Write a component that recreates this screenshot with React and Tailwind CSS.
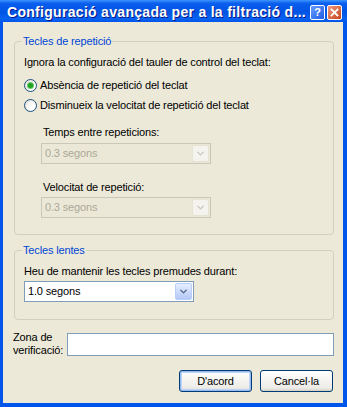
import { ChevronDown } from 'lucide-react';

function Radio({ checked, label }) {
  return (
    <div className="flex items-center gap-[3px] h-[20px]">
      <span className="w-[13px] h-[13px] rounded-full border border-[#1C5180] bg-[radial-gradient(circle_at_65%_65%,#ffffff_25%,#DCD9CB)] flex items-center justify-center">
        {checked && <span className="w-[5px] h-[5px] rounded-full bg-[#21A121] shadow-[0_0_0_1px_#6BC96B]" />}
      </span>
      <span>{label}</span>
    </div>
  );
}

function Combo({ value, disabled }) {
  return (
    <div
      className={`flex items-center w-[170px] h-[21px] border ${
        disabled ? 'border-[#C9C7BA] bg-[#EBE8D7] text-[#ACA899]' : 'border-[#7F9DB9] bg-white text-black'
      }`}
    >
      <span className="flex-1 pl-[3px]">{value}</span>
      <span
        className={`w-[17px] h-[17px] mr-[1px] rounded-[2px] flex items-center justify-center border ${
          disabled
            ? 'border-[#E6E3D5] bg-[#F4F3EE] text-[#C9C7BA]'
            : 'border-[#B9CDFB] bg-[linear-gradient(to_bottom,#E6EEFF,#B4C8F6)] text-[#4D6185]'
        }`}
      >
        <ChevronDown size={11} strokeWidth={3} />
      </span>
    </div>
  );
}

function XpButton({ label, isDefault }) {
  return (
    <button
      className={`w-[73px] h-[22px] rounded-[3px] border border-[#003C74] bg-[linear-gradient(to_bottom,#FFFFFF,#ECEBE6_85%,#D6D0C5)] ${
        isDefault ? 'shadow-[inset_0_0_0_1px_#97B8F2,inset_0_0_0_2px_#BCD4F6]' : ''
      }`}
    >
      {label}
    </button>
  );
}

export default function App() {
  return (
    <div
      className="w-[347px] h-[407px] flex flex-col bg-[#0055EA] text-[11px] text-black tracking-[-0.15px] overflow-hidden"
      style={{ fontFamily: '"Liberation Sans", Arial, sans-serif' }}
    >
      <div className="h-[22px] flex items-center pl-[7px] pr-[5px] bg-[linear-gradient(to_bottom,#3D95FF,#0A5FEE_15%,#0054E3_55%,#0A62F0_85%,#0055EA)]">
        <span className="flex-1 pt-[2px] text-white font-bold text-[14px] tracking-[0.3px] [text-shadow:1px_1px_#0A1883] whitespace-nowrap">
          Configuració avançada per a la filtració d...
        </span>
        <div className="flex gap-[2px] mt-[3px]">
          <span className="w-[15px] h-[15px] rounded-[2px] border border-white bg-[linear-gradient(135deg,#6A9CFF,#1E5CE6)] text-white font-bold text-[11px] tracking-normal flex items-center justify-center">
            ?
          </span>
          <span className="w-[15px] h-[15px] rounded-[2px] border border-white bg-[linear-gradient(135deg,#EE9A7C,#C7431B)] flex items-center justify-center">
            <svg width="9" height="9" viewBox="0 0 9 9">
              <path d="M1.5 1.5l6 6M7.5 1.5l-6 6" stroke="white" strokeWidth="1.8" strokeLinecap="square" />
            </svg>
          </span>
        </div>
      </div>
      <div className="flex-1 ml-[3px] mr-[4px] mb-[4px] bg-[#ECE9D8] pl-[11px] pr-[9px] pt-[11px] flex flex-col">
        <fieldset className="border border-[#D0D0BF] rounded-[4px] pl-[9px] pr-[8px] pb-[16px]">
          <legend className="text-[#0046D5] px-[1px] ml-[-2px]">Tecles de repetició</legend>
          <div className="mt-[4px] mb-[5px]">Ignora la configuració del tauler de control del teclat:</div>
          <Radio checked label="Absència de repetició del teclat" />
          <Radio label="Disminueix la velocitat de repetició del teclat" />
          <div className="pl-[17px] flex flex-col">
            <div className="ml-[2px] mt-[9px] mb-[2px]">Temps entre repeticions:</div>
            <Combo disabled value="0.3 segons" />
            <div className="ml-[2px] mt-[15px] mb-[2px]">Velocitat de repetició:</div>
            <Combo disabled value="0.3 segons" />
          </div>
        </fieldset>
        <fieldset className="mt-[7px] border border-[#D0D0BF] rounded-[4px] pl-[9px] pr-[8px] pb-[17px]">
          <legend className="text-[#0046D5] px-[1px] ml-[-2px]">Tecles lentes</legend>
          <div className="mt-[4px] mb-[2px]">Heu de mantenir les tecles premudes durant:</div>
          <Combo value="1.0 segons" />
        </fieldset>
        <div className="mt-[11px] flex items-center gap-[1px] ml-[-1px]">
          <div className="leading-[13px] w-[53px]">
            Zona de
            <br />
            verificació:
          </div>
          <div className="flex-1 h-[23px] border border-[#7F9DB9] bg-white" />
        </div>
        <div className="mt-[13px] flex justify-end gap-[8px] pr-[1px]">
          <XpButton isDefault label="D'acord" />
          <XpButton label="Cancel·la" />
        </div>
      </div>
    </div>
  );
}
